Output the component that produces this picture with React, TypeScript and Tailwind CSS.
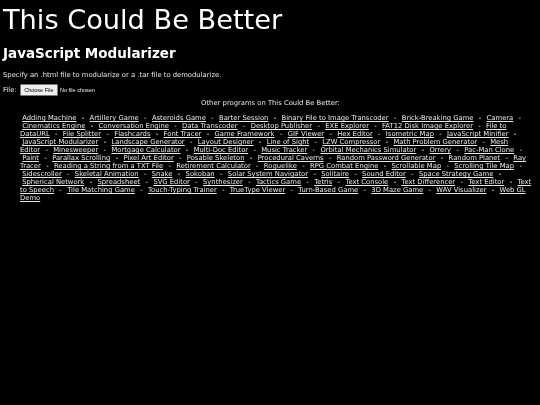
const names = ["Adding Machine","Artillery Game","Asteroids Game","Barter Session","Binary File to Image Transcoder","Brick-Breaking Game","Camera","Cinematics Engine","Conversation Engine","Data Transcoder","Desktop Publisher","EXE Explorer","FAT12 Disk Image Explorer","File to DataURL","File Splitter","Flashcards","Font Tracer","Game Framework","GIF Viewer","Hex Editor","Isometric Map","JavaScript Minifier","JavaScript Modularizer","Landscape Generator","Layout Designer","Line of Sight","LZW Compressor","Math Problem Generator","Mesh Editor","Minesweeper","Mortgage Calculator","Multi-Doc Editor","Music Tracker","Orbital Mechanics Simulator","Orrery","Pac-Man Clone","Paint","Parallax Scrolling","Pixel Art Editor","Posable Skeleton","Procedural Caverns","Random Password Generator","Random Planet","Ray Tracer","Reading a String from a TXT File","Retirement Calculator","Roguelike","RPG Combat Engine","Scrollable Map","Scrolling Tile Map","Sidescroller","Skeletal Animation","Snake","Sokoban","Solar System Navigator","Solitaire","Sound Editor","Space Strategy Game","Spherical Network","Spreadsheet","SVG Editor","Synthesizer","Tactics Game","Tetris","Text Console","Text Differencer","Text Editor","Text to Speech","Tile Matching Game","Touch-Typing Trainer","TrueType Viewer","Turn-Based Game","3D Maze Game","WAV Visualizer","Web GL Demo"];

export default function App() {
  return (
    <div className="min-h-[405px] bg-black">
      <div className="[will-change:transform] text-[#e8e8e8] font-['DejaVu_Sans',sans-serif] px-[3px] text-[6.8px] leading-[12px]">
        <h1 className="text-[27.2px] leading-[32px] pt-[4px] text-white">This Could Be Better</h1>
        <h2 className="text-[13.5px] leading-[16px] font-bold mt-[9px] text-white">JavaScript Modularizer</h2>
        <p className="mt-[8px]">Specify an .html file to modularize or a .tar file to demodularize.</p>
        <div className="mt-[3px] flex items-center gap-[3px] h-[12px]">
          <span>File:</span>
          <input type="file" className="text-[5.5px] leading-[8px] font-['Liberation_Sans',sans-serif] file:text-black file:bg-[#efefef] file:border file:border-[#767676] file:rounded-[1px] file:px-[3.5px] file:py-[1px] file:mr-[2px]" />
        </div>
        <p className="text-center mt-[1px] pl-[1px]">Other programs on This Could Be Better:</p>
        <p className="mt-[5px] pl-[17px] pr-[5px] leading-[8px]">
          {names.map((n, i) => (
            <span key={n}>
              {"\u00a0"}
              <a href="#" className="underline">{n}</a>
              {i < names.length - 1 ? <>{"\u00a0 "}<span className="px-[1px]">-</span>{" "}</> : ""}
            </span>
          ))}
        </p>
      </div>
    </div>
  );
}
